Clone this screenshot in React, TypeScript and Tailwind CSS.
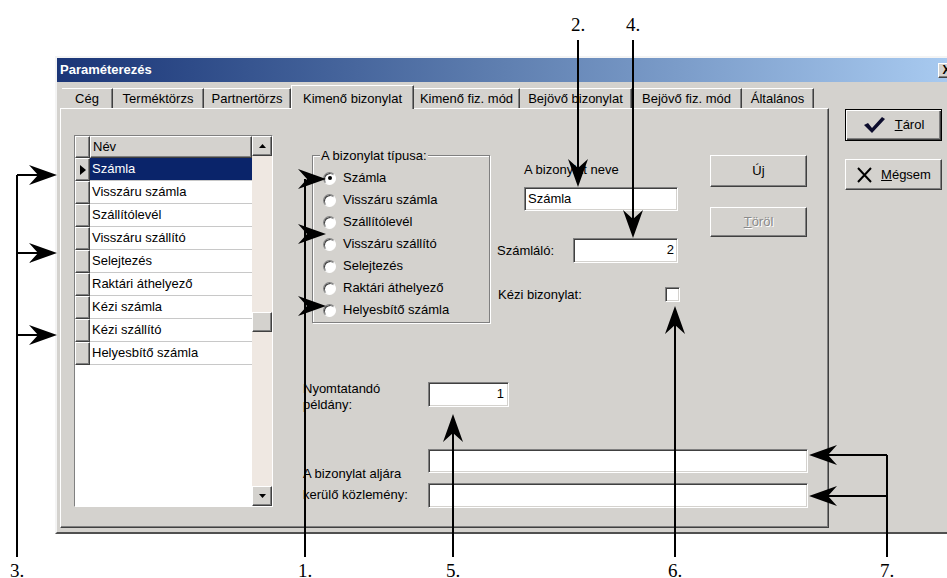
import React from "react";

const listItems = [
  "Számla",
  "Visszáru számla",
  "Szállítólevél",
  "Visszáru szállító",
  "Selejtezés",
  "Raktári áthelyező",
  "Kézi számla",
  "Kézi szállító",
  "Helyesbítő számla",
];

const radioItems = [
  "Számla",
  "Visszáru számla",
  "Szállítólevél",
  "Visszáru szállító",
  "Selejtezés",
  "Raktári áthelyező",
  "Helyesbítő számla",
];

const tabs = [
  { label: "Cég", w: "w-[51px]" },
  { label: "Terméktörzs", w: "w-[91px]" },
  { label: "Partnertörzs", w: "w-[87px]" },
  { label: "Kimenő bizonylat", w: "w-[123px]" },
  { label: "Kimenő fiz. mód", w: "w-[106px]" },
  { label: "Bejövő bizonylat", w: "w-[112px]" },
  { label: "Bejövő fiz. mód", w: "w-[110px]" },
  { label: "Általános", w: "w-[72px]" },
];

// win2000 style bevels
const sunken =
  "bg-white border border-t-[#808080] border-l-[#808080] border-b-white border-r-white shadow-[inset_1px_1px_0_#404040,inset_-1px_-1px_0_#d4d2ce]";
const raised =
  "bg-[#d4d2ce] border border-t-white border-l-white border-b-[#404040] border-r-[#404040] shadow-[inset_-1px_-1px_0_#808080]";

function Head({ x, y, dir }: { x: number; y: number; dir: "r" | "l" | "u" | "d" }) {
  const rot = { r: 0, d: 90, l: 180, u: 270 }[dir];
  return (
    <path
      d="M0 0 L-28 -10 L-19 0 L-28 10 Z"
      transform={`translate(${x} ${y}) rotate(${rot})`}
      fill="black"
    />
  );
}

function Annotations() {
  const labelStyle = { fontFamily: "'Liberation Serif', serif", fontSize: 19 };
  return (
    <svg
      className="absolute inset-0 pointer-events-none"
      width={947}
      height={578}
      viewBox="0 0 947 578"
    >
      <g stroke="black" strokeWidth={2} fill="none">
        {/* 3 */}
        <path d="M17 175 V557 M17 175 H40 M17 253 H40 M17 335 H40" />
        {/* 1 */}
        <path d="M305 179 V557" />
        {/* 2, 4 */}
        <path d="M578 40 V180 M633 40 V232" />
        {/* 5, 6 */}
        <path d="M453 420 V557 M675 312 V557" />
        {/* 7 */}
        <path d="M887 455 V557 M887 455 H815 M887 496 H815" />
      </g>
      <Head x={57} y={175} dir="r" />
      <Head x={57} y={253} dir="r" />
      <Head x={57} y={335} dir="r" />
      <Head x={326} y={179} dir="r" />
      <Head x={326} y={234} dir="r" />
      <Head x={326} y={306} dir="r" />
      <Head x={578} y={187} dir="d" />
      <Head x={633} y={238} dir="d" />
      <Head x={453} y={414} dir="u" />
      <Head x={675} y={306} dir="u" />
      <Head x={809} y={455} dir="l" />
      <Head x={809} y={496} dir="l" />
      <g style={labelStyle} fill="black">
        <text x={571} y={31}>2.</text>
        <text x={626} y={31}>4.</text>
        <text x={10} y={577}>3.</text>
        <text x={298} y={577}>1.</text>
        <text x={446} y={577}>5.</text>
        <text x={668} y={577}>6.</text>
        <text x={880} y={577}>7.</text>
      </g>
    </svg>
  );
}

function ListBox() {
  return (
    <div className={`${sunken} ml-[13px] mt-[26px] w-[199px] h-[372px] flex`}>
      <div className="w-[177px] flex flex-col bg-white">
        <div className="flex h-[22px]">
          <div className={`${raised} w-[15px]`}></div>
          <div className={`${raised} flex-1 pl-[2px] leading-[20px]`}>Név</div>
        </div>
        {listItems.map((item, i) => (
          <div key={i} className="flex h-[23px]">
            <div className={`${raised} w-[15px] flex items-center justify-center`}>
              {i === 0 && (
                <svg width="6" height="10" viewBox="0 0 6 10">
                  <path d="M0 0 L6 5 L0 10 Z" fill="black" />
                </svg>
              )}
            </div>
            <div
              className={`flex-1 pl-[2px] leading-[22px] border-b border-b-[#c8c8c8] ${
                i === 0 ? "bg-[#0a246a] text-white" : ""
              }`}
            >
              {item}
            </div>
          </div>
        ))}
      </div>
      <div className="w-[20px] flex flex-col bg-[#efe8e2]">
        <div className={`${raised} h-[20px] flex items-center justify-center`}>
          <svg width="7" height="4" viewBox="0 0 7 4">
            <path d="M0 4 L3.5 0 L7 4 Z" fill="black" />
          </svg>
        </div>
        <div className="flex-1">
          <div className={`${raised} h-[20px] mt-[156px]`}></div>
        </div>
        <div className={`${raised} h-[20px] flex items-center justify-center`}>
          <svg width="7" height="4" viewBox="0 0 7 4">
            <path d="M0 0 L3.5 4 L7 0 Z" fill="black" />
          </svg>
        </div>
      </div>
    </div>
  );
}

function RadioGroup() {
  return (
    <div className="relative ml-[9px] w-[178px] h-[168px] border border-[#808080] shadow-[inset_1px_1px_0_#fff,1px_1px_0_#fff]">
      <span className="absolute left-[7px] -top-[8px] bg-[#d4d2ce] px-px leading-[15px]">
        A bizonylat típusa:
      </span>
      <div className="flex flex-col pt-[11px] pl-[10px]">
        {radioItems.map((item, i) => (
          <div key={i} className="h-[22px] flex items-center gap-[7px]">
            <span className="w-[13px] h-[13px] rounded-full bg-white border border-t-[#808080] border-l-[#808080] border-b-white border-r-white shadow-[inset_1px_1px_0_#404040] flex items-center justify-center">
              {i === 0 && <span className="w-[4px] h-[4px] rounded-full bg-black"></span>}
            </span>
            <span>{item}</span>
          </div>
        ))}
      </div>
    </div>
  );
}

function App() {
  return (
    <div className="relative w-[947px] h-[578px] bg-white overflow-hidden font-['Liberation_Sans',Arial,sans-serif] text-[13px] text-black">
      {/* dialog window */}
      <div className="ml-[55px] mt-[56px] w-[892px] h-[478px] bg-[#d4d2ce] border-l-2 border-t-2 border-b-2 border-l-[#f4f4f4] border-t-[#f4f4f4] border-b-[#505050] flex flex-col">
        {/* title bar */}
        <div className="h-[24px] bg-linear-to-r from-[#1b3577] via-[#5f7fb0] to-[#a8caf0] flex items-center pl-[3px]">
          <span className="text-white font-bold text-[13px]">Paraméterezés</span>
          <div className={`${raised} ml-auto -mr-[8px] w-[17px] h-[15px] flex items-center justify-center text-[12px] font-bold leading-none`}>
            X
          </div>
        </div>

        <div className="flex pl-[3px] pt-[3px]">
          {/* tab control */}
          <div className="w-[769px] flex flex-col">
            <div className="h-[23px] flex items-end pl-[2px]">
              {tabs.map((t, i) =>
                i === 3 ? (
                  <div
                    key={i}
                    className={`${t.w} relative z-10 -mb-[1px] h-[24px] bg-[#d4d2ce] border-l border-t border-l-white border-t-white border-r border-r-[#404040] shadow-[inset_-1px_0_0_#808080] flex justify-center pt-[5px] leading-[15px] whitespace-nowrap`}
                  >
                    {t.label}
                  </div>
                ) : (
                  <div
                    key={i}
                    className={`${t.w} h-[20px] border-t border-t-white border-r border-r-[#404040] shadow-[inset_-1px_0_0_#808080] flex items-center justify-center whitespace-nowrap`}
                  >
                    {t.label}
                  </div>
                )
              )}
            </div>

            {/* tab page */}
            <div className="h-[420px] border border-t-white border-l-white border-r-[#404040] border-b-[#404040] shadow-[inset_-1px_-1px_0_#808080] flex items-start">
              <ListBox />

              <div className="ml-[30px] mt-[46px] flex flex-col">
                <div className="flex items-start">
                  <RadioGroup />

                  <div className="ml-[7px] w-[183px] flex flex-col">
                    <div className="ml-[27px] mt-[8px] leading-[14px]">A bizonylat neve</div>
                    <div className={`${sunken} ml-[27px] mt-[10px] w-[154px] h-[24px] pl-[3px] leading-[21px]`}>
                      Számla
                    </div>
                    <div className="mt-[27px] flex items-center h-[25px]">
                      <span className="w-[76px]">Számláló:</span>
                      <div className={`${sunken} w-[105px] h-[25px] pr-[3px] text-right leading-[22px]`}>2</div>
                    </div>
                    <div className="mt-[24px] flex items-center justify-between h-[15px]">
                      <span className="ml-px">Kézi bizonylat:</span>
                      <span className={`${sunken} w-[15px] h-[15px]`}></span>
                    </div>
                  </div>

                  <div className="ml-[30px] w-[97px] flex flex-col">
                    <div className={`${raised} h-[32px] flex items-center justify-center`}>Új</div>
                    <div className={`${raised} mt-[20px] h-[30px] flex items-center justify-center text-[#8a8a8a] [text-shadow:1px_1px_0_#fff]`}>
                      <span>
                        <span className="underline">T</span>öröl
                      </span>
                    </div>
                  </div>
                </div>

                <div className="mt-[59px] flex items-start">
                  <div className="w-[125px] -mt-[1px] leading-[16px]">
                    Nyomtatandó
                    <br />
                    példány:
                  </div>
                  <div className={`${sunken} w-[81px] h-[25px] pr-[4px] text-right leading-[22px]`}>1</div>
                </div>

                <div className="mt-[36px] flex items-start">
                  <div className="w-[125px] pt-[14px] leading-[21px]">
                    A bizonylat aljára
                    <br />
                    kerülő közlemény:
                  </div>
                  <div className="flex flex-col">
                    <div className={`${sunken} w-[380px] h-[24px]`}></div>
                    <div className={`${sunken} w-[380px] h-[25px] mt-[10px]`}></div>
                  </div>
                </div>
              </div>
            </div>
          </div>

          {/* dialog buttons */}
          <div className="ml-[16px] mt-[24px] w-[97px] flex flex-col">
            <div className="h-[32px] border border-black bg-[#d4d2ce] shadow-[inset_1px_1px_0_#fff,inset_-1px_-1px_0_#404040,inset_-2px_-2px_0_#808080] flex items-center justify-center gap-[10px]">
              <svg width="22" height="18" viewBox="0 0 22 18">
                <path d="M1 9 L5 7 L9 12 L19 1 L22 3 L9 17 Z" fill="#0c0c2c" />
              </svg>
              <span>
                <span className="underline">T</span>árol
              </span>
            </div>
            <div className={`${raised} mt-[18px] h-[31px] flex items-center justify-center gap-[8px]`}>
              <svg width="17" height="16" viewBox="0 0 17 16">
                <path d="M2 1 L15 15 M15 1 L2 15" stroke="black" strokeWidth="2" />
              </svg>
              <span>
                <span className="underline">M</span>égsem
              </span>
            </div>
          </div>
        </div>
      </div>

      <Annotations />
    </div>
  );
}

export default App;
